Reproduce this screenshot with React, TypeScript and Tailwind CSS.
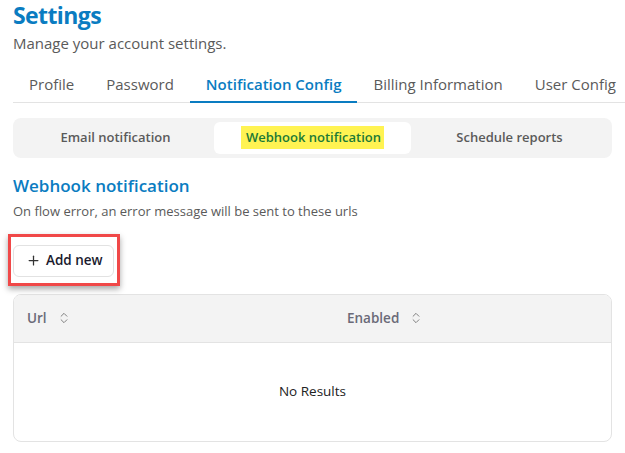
import React from 'react';
import { ChevronsUpDown, Plus } from 'lucide-react';

const tabs = ['Profile', 'Password', 'Notification Config', 'Billing Information', 'User Config'];
const segments = ['Email notification', 'Webhook notification', 'Schedule reports'];

export default function App() {
  return (
    <div
      className="w-[625px] h-[453px] overflow-hidden bg-white pl-[13px] text-[#555]"
      style={{ fontFamily: '"Open Sans", "Noto Sans", sans-serif' }}
    >
      <h1 className="text-[23px] font-bold leading-[30px] text-[#0a7cc1] tracking-[-0.6px]">Settings</h1>
      <p className="mt-[3px] text-[15px] leading-[20px] text-[#5a5a5a]">Manage your account settings.</p>

      {/* main tabs */}
      <div className="mt-[20px] flex border-b border-[#e3e3e3] whitespace-nowrap">
        {tabs.map((t, i) => (
          <div
            key={t}
            className={
              i === 2
                ? 'px-4 pb-[5px] text-[15px] font-semibold text-[#0a7cc1] border-b-2 border-[#0a7cc1] -mb-px'
                : 'px-4 pb-[6px] text-[15px] text-[#5a5a5a]'
            }
          >
            {t}
          </div>
        ))}
      </div>

      <div className="w-[599px]">
        {/* segmented control */}
        <div className="mt-[15px] grid grid-cols-3 rounded-lg bg-[#f3f3f3] p-1">
          {segments.map((s, i) => (
            <div
              key={s}
              className={
                'flex h-[32px] items-center justify-center rounded-md text-[13px] font-semibold ' +
                (i === 1 ? 'bg-white' : 'text-[#5a5a5a]')
              }
            >
              {i === 1 ? (
                <span className="bg-[#fff352] pl-[5px] pr-[3px] py-[2px] text-[#1c7a36]">{s}</span>
              ) : (
                s
              )}
            </div>
          ))}
        </div>

        <h2 className="mt-[16px] text-[17px] font-semibold leading-[24px] text-[#0a7cc1]">Webhook notification</h2>
        <p className="mt-[4px] text-[13px] leading-[18px] text-[#5a5a5a]">
          On flow error, an error message will be sent to these urls
        </p>

        {/* highlighted add button */}
        <div className="mt-[14px] -ml-[5px] inline-block border-[3px] border-[#f04848] pt-[8px] pb-[6px] pl-[2px] pr-[3px] shadow-[0_3px_6px_rgba(0,0,0,0.35)]">
          <button className="flex h-[32px] items-center gap-[5px] rounded-md border border-[#e2e2e2] bg-white pl-[12px] pr-[10px] text-[13.5px] font-semibold text-[#1a1a2e]">
            <Plus size={15} strokeWidth={2} className="text-[#333]" />
            Add new
          </button>
        </div>

        {/* table */}
        <div className="mt-[8px] overflow-hidden rounded-lg border border-[#e3e3e3]">
          <div className="flex h-[48px] items-center border-b border-[#e3e3e3] bg-[#f3f3f3] text-[13.5px] font-semibold text-[#6a6a78]">
            <div className="flex w-[333px] items-center gap-[10px] pl-[13px]">
              Url
              <ChevronsUpDown size={14} strokeWidth={1.6} className="text-[#777]" />
            </div>
            <div className="flex items-center gap-[10px]">
              Enabled
              <ChevronsUpDown size={14} strokeWidth={1.6} className="text-[#777]" />
            </div>
          </div>
          <div className="flex h-[98px] items-center justify-center text-[13.5px] text-[#222]">No Results</div>
        </div>
      </div>
    </div>
  );
}
